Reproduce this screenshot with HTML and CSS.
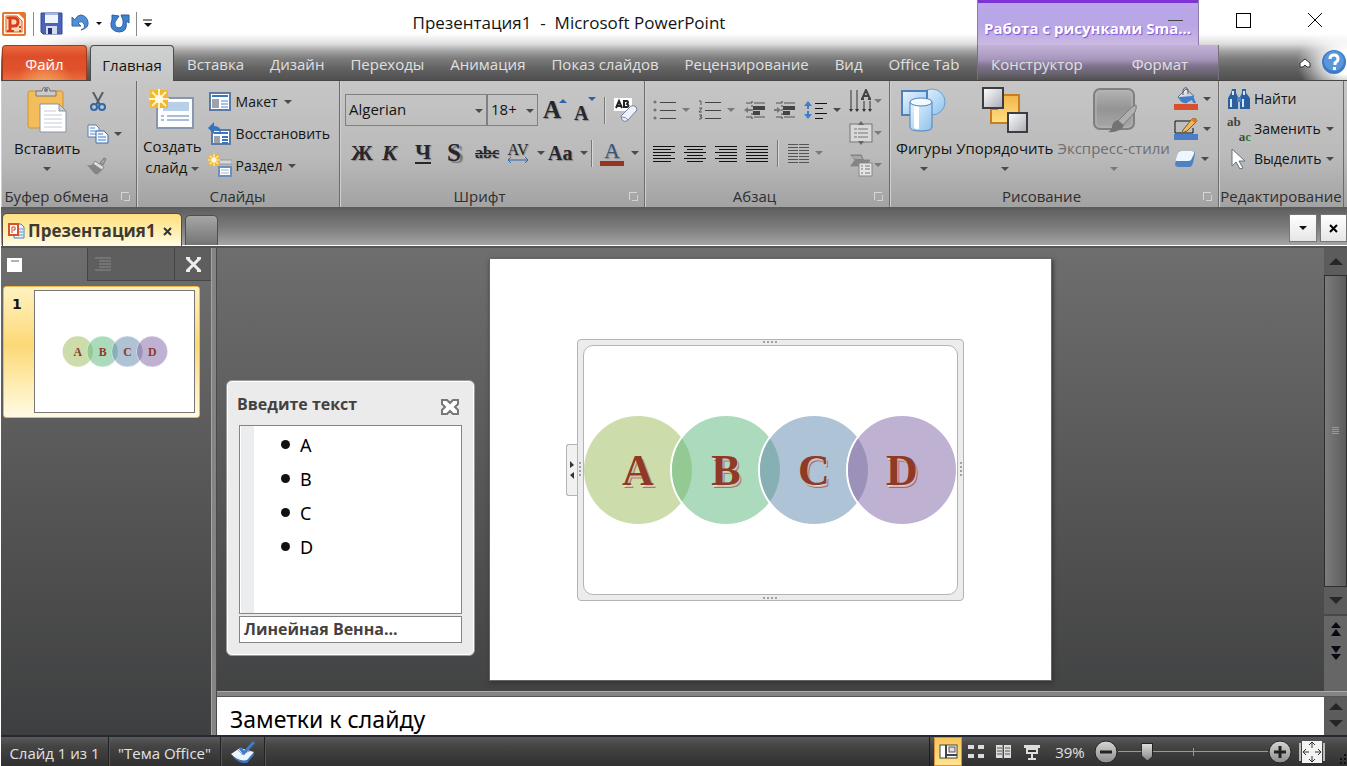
FILE: index.html
```html
<!DOCTYPE html>
<html lang="ru">
<head>
<meta charset="utf-8">
<meta name="viewport" content="width=device-width, initial-scale=1">
<title>Презентация1 - Microsoft PowerPoint</title>
<link rel="stylesheet" href="styles.css">
</head>
<body>
<svg class="defs" aria-hidden="true">
  <defs>
    <linearGradient id="gBlue" x1="0" y1="0" x2="1" y2="1"><stop offset="0" stop-color="#e8f5fe"/><stop offset="1" stop-color="#8fc1ee"/></linearGradient>
    <linearGradient id="gSteel" x1="0" y1="0" x2="1" y2="1"><stop offset="0" stop-color="#fff"/><stop offset="1" stop-color="#a9acb4"/></linearGradient>
    <linearGradient id="gGold" x1="0" y1="0" x2="0" y2="1"><stop offset="0" stop-color="#f2b548"/><stop offset="1" stop-color="#ffdf84"/></linearGradient>
    <linearGradient id="gKnob" x1="0" y1="0" x2="0" y2="1"><stop offset="0" stop-color="#d6d6d6"/><stop offset="1" stop-color="#8c8c8c"/></linearGradient>
    <linearGradient id="gGrey" x1="0" y1="0" x2="0" y2="1"><stop offset="0" stop-color="#b4b4b4"/><stop offset="0.5" stop-color="#949494"/><stop offset="1" stop-color="#a8a8a8"/></linearGradient>
    <symbol id="spark" viewBox="0 0 20 20"><rect x="1" y="1" width="18" height="18" fill="#f3b62c"/><path d="M10 0v20M0 10h20M3 3l14 14M17 3L3 17" stroke="#fff3c4" stroke-width="2"/><circle cx="10" cy="10" r="4" fill="#fffbe6"/></symbol>
  </defs>
</svg>
<div class="app">
  <header class="top">
    <div class="titlebar">
      <div class="qat">
        <svg width="26" height="26" viewBox="0 0 26 26" role="img" aria-label="PowerPoint"><rect x="1" y="1" width="24" height="24" rx="2" fill="#e8752f"/><path d="M3 3h15l5 5v15H3z" fill="#fff6ec"/><path d="M5 5h11l5 5v11H5z" fill="#fbd9bd" stroke="#e0612a"/><path d="M9 20V7h4q4 0 4 4t-4 4h-3" fill="none" stroke="#d8401a" stroke-width="3"/><path d="M6 7h5M6 20h7M19 15v2m0 2v2" stroke="#d8401a" stroke-width="2"/></svg>
        <span class="qsep"></span>
        <button type="button" aria-label="Сохранить"><svg width="23" height="23" viewBox="0 0 23 23"><path d="M1 1h21v21H3l-2-2z" fill="#4a62b8" stroke="#33479a"/><path d="M5 1h13v10H5z" fill="#eef5fc"/><path d="M5 1h13v2H5z" fill="#9db8e2"/><path d="M6 14h11v8H6z" fill="#d5dcec"/><path d="M8 16h4v6H8z" fill="#27347a"/></svg></button>
        <button type="button" class="undo" aria-label="Отменить"><svg width="18" height="20" viewBox="0 0 18 20"><path d="M1 3v9h9L7 9q4-3 6 1t-3 6q8-2 7-8T10 1Q6 1 4 6z" fill="#4f90d6" stroke="#3466a6"/></svg><i class="caret dark"></i></button>
        <button type="button" aria-label="Повторить"><svg width="20" height="20" viewBox="0 0 20 20"><path d="M11 1h8v8l-3-2q2 11-7 11Q0 17 1 9l1-3h0V1l7 1-2 3q-3 3-2 6 1 3 4 3 5-1 4-8z" fill="#3f83cf" stroke="#2d5f9f"/></svg></button>
        <span class="qsep"></span>
        <button type="button" aria-label="Настройка панели"><svg width="10" height="9" viewBox="0 0 10 9"><path d="M0 1h9" stroke="#111" stroke-width="1"/><path d="M1 4h8L5 8z" fill="#111"/></svg></button>
      </div>
      <h1 class="title">Презентация1 &nbsp;-&nbsp; Microsoft PowerPoint</h1>
      <div class="context-title">Работа с рисунками Sma...</div>
      <div class="wincontrols">
        <button type="button" class="min" aria-label="Свернуть"></button>
        <button type="button" class="max" aria-label="Развернуть"><svg width="16" height="16" viewBox="0 0 16 16"><path d="M1 1h14v14H1z" fill="none" stroke="#000" shape-rendering="crispEdges"/></svg></button>
        <button type="button" class="close" aria-label="Закрыть"><svg width="16" height="16" viewBox="0 0 16 16"><path d="M1 1l14 14M15 1L1 15" stroke="#000"/></svg></button>
      </div>
    </div>
    <nav class="tabs" aria-label="Лента">
      <button type="button" class="tab file">Файл</button>
      <button type="button" class="tab active">Главная</button>
      <button type="button" class="tab">Вставка</button>
      <button type="button" class="tab">Дизайн</button>
      <button type="button" class="tab">Переходы</button>
      <button type="button" class="tab">Анимация</button>
      <button type="button" class="tab">Показ слайдов</button>
      <button type="button" class="tab">Рецензирование</button>
      <button type="button" class="tab">Вид</button>
      <button type="button" class="tab">Office Tab</button>
      <div class="context-tabs"><button type="button" class="tab">Конструктор</button><button type="button" class="tab">Формат</button></div>
      <div class="helpers">
        <button type="button" aria-label="Свернуть ленту"><svg width="14" height="12" viewBox="0 0 14 12"><path d="M2 10V6l5-4 5 4v4H9L7 8l-2 2z" fill="#fff" stroke="#333"/></svg></button>
        <button type="button" aria-label="Справка"><svg width="25" height="25" viewBox="0 0 25 25"><circle cx="12" cy="12" r="12" fill="#3b7bc8"/><circle cx="12" cy="11" r="10" fill="#5a96da"/><path d="M8 9q0-4 4-4t4 4q0 2-3 4v2" fill="none" stroke="#fff" stroke-width="3"/><rect x="11" y="17" width="3" height="3" fill="#fff"/></svg></button>
      </div>
    </nav>
  </header>

  <section class="ribbon">
    <div class="group g-clip">
      <div class="body">
        <button type="button" class="big paste">
          <svg width="40" height="46" viewBox="0 0 40 46"><rect x="1" y="4" width="35" height="37" rx="2" fill="#f2bd5a" stroke="#cf9335"/><path d="M9 9V4h6q0-4 4-4t4 4h6v5z" fill="#c9cbce" stroke="#77797d"/><circle cx="19" cy="3" r="2" fill="#777"/><path d="M13 17h19l7 7v21H13z" fill="#fff" stroke="#8894a8"/><path d="M32 17v7h7z" fill="#c6cfdd" stroke="#8894a8"/><path d="M17 24h12M17 28h18M17 32h18M17 36h18M17 40h18" stroke="#c3ccd8"/></svg>
          <span>Вставить</span><i class="caret"></i>
        </button>
        <div class="stack">
          <button type="button" class="ico" aria-label="Вырезать"><svg width="16" height="20" viewBox="0 0 16 20"><path d="M3 0l7 13M13 0L6 13" stroke="#555d68" stroke-width="2"/><circle cx="4" cy="15" r="3" fill="none" stroke="#2f68ad" stroke-width="2"/><circle cx="12" cy="15" r="3" fill="none" stroke="#2f68ad" stroke-width="2"/></svg></button>
          <button type="button" class="ico" aria-label="Копировать"><svg width="22" height="20" viewBox="0 0 22 20"><path d="M1 1h8l3 3v9H1z" fill="#f4f8fd" stroke="#5a7fae"/><path d="M3 4h5M3 7h7M3 10h7" stroke="#5a8fd0"/><path d="M9 7h8l4 4v8H9z" fill="#f4f8fd" stroke="#3a6cab"/><path d="M11 10h5M11 13h8M11 16h8" stroke="#3a7ccf"/></svg><i class="caret"></i></button>
          <button type="button" class="ico" aria-label="Формат по образцу"><svg width="20" height="18" viewBox="0 0 20 18"><path d="M13 6l4-5 2 1-3 6z" fill="#a4a4a4" stroke="#777"/><path d="M8 4l9 6-2 3-9-6z" fill="#dedede" stroke="#888"/><path d="M6 7l9 6-4 4q-2 1-4-1L0 8q4 1 6-1z" fill="#858585"/></svg></button>
        </div>
      </div>
      <footer><span>Буфер обмена</span><i class="launch"></i></footer>
    </div>

    <div class="group g-slides">
      <div class="body">
        <button type="button" class="big">
          <svg width="46" height="42" viewBox="0 0 46 42"><path d="M8 9h36v30H8z" fill="#fbfdff" stroke="#8797ad" stroke-width="2"/><path d="M14 13h26v9H14z" fill="#b9cfe8"/><path d="M12 27h3m3 0h22M12 31h3m3 0h22" stroke="#a9bdd4" stroke-width="2"/><use href="#spark" width="20" height="20"/></svg>
          <span>Создать<br>слайд <i class="caret"></i></span>
        </button>
        <div class="stack">
          <button type="button" class="row"><svg width="24" height="20" viewBox="0 0 24 20"><rect x="2" y="1" width="20" height="17" fill="#fff" stroke="#5c7ba4" stroke-width="2"/><path d="M4 4h16" stroke="#3f76ba" stroke-width="2"/><rect x="4" y="7" width="7" height="9" fill="#9ba3ae"/><path d="M13 9h7M13 12h7M13 15h7" stroke="#4a8ad0"/></svg><span>Макет</span><i class="caret"></i></button>
          <button type="button" class="row"><svg width="24" height="24" viewBox="0 0 24 24"><rect x="4" y="8" width="18" height="14" fill="#fff" stroke="#5c7ba4" stroke-width="2"/><path d="M6 11h14" stroke="#3f76ba" stroke-width="2"/><rect x="6" y="14" width="6" height="7" fill="#9ba3ae"/><path d="M14 15h6M14 18h6M14 21h6" stroke="#3a74bd" stroke-width="2"/><path d="M0 6l6-6v4q7 0 7 7-2-3-7-3v4z" fill="#3474bf"/></svg><span>Восстановить</span></button>
          <button type="button" class="row"><svg width="24" height="24" viewBox="0 0 24 24"><path d="M11 6h13v4H11z" fill="#d6d8da" stroke="#999"/><rect x="11" y="13" width="12" height="9" fill="#fff" stroke="#6d90bd" stroke-width="2"/><path d="M13 16h8M13 19h8" stroke="#9bb9db"/><use href="#spark" width="12" height="12"/></svg><span>Раздел</span><i class="caret"></i></button>
        </div>
      </div>
      <footer><span>Слайды</span></footer>
    </div>

    <div class="group g-font">
      <div class="body">
        <div class="line first">
          <div class="combos">
            <label class="combo name"><select aria-label="Шрифт"><option>Algerian</option></select><i class="caret"></i></label>
            <label class="combo size"><select aria-label="Размер шрифта"><option>18+</option></select><i class="caret"></i></label>
          </div>
          <button type="button" class="glyph a-big" aria-label="Увеличить размер">A<i class="up"></i></button>
          <button type="button" class="glyph a-small" aria-label="Уменьшить размер">A<i class="down"></i></button>
          <span class="sep"></span>
          <button type="button" class="ico" aria-label="Очистить формат"><svg width="24" height="26" viewBox="0 0 24 26"><rect x="0" y="1" width="18" height="13" fill="#fff"/><path d="M2 11l3-7 3 7M3 9h4M10 4h3q2 1 0 3 3 2 0 3h-3z" fill="none" stroke="#222" stroke-width="2"/><path d="M7 19L17 9q3-1 5 1l1 3L13 24q-3 1-5-1z" fill="#eef1f8" stroke="#75829c"/><path d="M8 20q4 0 6 3" fill="none" stroke="#6b8fc4"/></svg></button>
        </div>
        <div class="line second">
          <button type="button" class="glyph">Ж</button>
          <button type="button" class="glyph it">К</button>
          <button type="button" class="glyph un">Ч</button>
          <button type="button" class="glyph sh">S</button>
          <button type="button" class="glyph st">abc</button>
          <button type="button" class="glyph av">AV<svg width="22" height="6" viewBox="0 0 22 6"><path d="M1 3h20M4 0L1 3l3 3M18 0l3 3-3 3" fill="none" stroke="#2b64b2"/></svg></button><i class="caret"></i>
          <button type="button" class="glyph aa">Aa</button><i class="caret"></i>
          <span class="sep"></span>
          <button type="button" class="glyph col">A<i class="bar"></i></button><i class="caret"></i>
        </div>
      </div>
      <footer><span>Шрифт</span><i class="launch"></i></footer>
    </div>

    <div class="group g-para">
      <div class="body">
        <div class="lines">
          <div class="line">
            <button type="button" class="ico" aria-label="Маркеры"><svg width="24" height="20" viewBox="0 0 24 20"><g fill="#ccc" stroke="#555"><circle cx="2" cy="2" r="1"/><circle cx="2" cy="10" r="1"/><circle cx="2" cy="18" r="1"/></g><path d="M7 2h16M7 10h16M7 18h16" stroke="#444" shape-rendering="crispEdges"/></svg><i class="caret soft"></i></button>
            <button type="button" class="ico" aria-label="Нумерация"><svg width="24" height="20" viewBox="0 0 24 20"><path d="M1 1h2v4M1 8h3l-3 4h3M1 15h3l-2 2h2l-1 2H1" fill="none" stroke="#555"/><path d="M7 2h16M7 10h16M7 18h16" stroke="#444" shape-rendering="crispEdges"/></svg><i class="caret soft"></i></button>
            <button type="button" class="ico" aria-label="Уменьшить отступ"><svg width="22" height="18" viewBox="0 0 22 18"><path d="M2 2h19M2 16h19" stroke="#555" stroke-dasharray="6 2 12"/><path d="M9 5h12v4H9zM9 10h7v4H9z" fill="#444"/><path d="M8 0v18" stroke="#444" stroke-dasharray="2 2"/><path d="M0 9l4-3v2h3v2H4v2z" fill="#777"/></svg></button>
            <button type="button" class="ico" aria-label="Увеличить отступ"><svg width="22" height="18" viewBox="0 0 22 18"><path d="M2 2h19M2 16h19" stroke="#555" stroke-dasharray="6 2 12"/><path d="M9 5h12v4H9zM9 10h7v4H9z" fill="#444"/><path d="M8 0v18" stroke="#444" stroke-dasharray="2 2"/><path d="M7 9L3 6v2H0v2h3v2z" fill="#777"/></svg></button>
            <button type="button" class="ico" aria-label="Междустрочный интервал"><svg width="24" height="20" viewBox="0 0 24 20"><path d="M0 6l4-5 4 5H5v3H3V6zM0 14l4 5 4-5H5v-3H3v3z" fill="#3a7fd0"/><path d="M11 3h12M11 8h8M11 13h12M11 18h8" stroke="#111" shape-rendering="crispEdges"/></svg><i class="caret"></i></button>
          </div>
          <div class="line second">
            <button type="button" class="ico" aria-label="По левому краю"><svg width="22" height="17" viewBox="0 0 22 17"><path d="M0 1h22M0 4h18M0 7h22M0 10h18M0 13h22M0 16h18" stroke="#111" shape-rendering="crispEdges"/></svg></button>
            <button type="button" class="ico" aria-label="По центру"><svg width="22" height="17" viewBox="0 0 22 17"><path d="M0 1h22M3 4h16M0 7h22M3 10h16M0 13h22M3 16h16" stroke="#111" shape-rendering="crispEdges"/></svg></button>
            <button type="button" class="ico" aria-label="По правому краю"><svg width="22" height="17" viewBox="0 0 22 17"><path d="M0 1h22M4 4h18M0 7h22M4 10h18M0 13h22M4 16h18" stroke="#111" shape-rendering="crispEdges"/></svg></button>
            <button type="button" class="ico" aria-label="По ширине"><svg width="22" height="17" viewBox="0 0 22 17"><path d="M0 1h22M0 4h22M0 7h22M0 10h22M0 13h22M0 16h22" stroke="#111" shape-rendering="crispEdges"/></svg></button>
            <span class="sep"></span>
            <button type="button" class="ico" aria-label="Колонки"><svg width="22" height="20" viewBox="0 0 22 20"><path d="M0 1h10m1 0h10M0 4h10m1 0h10M0 7h10m1 0h10M0 10h10m1 0h10M0 13h10m1 0h10M0 16h10m1 0h10M0 19h10m1 0h10" stroke="#555" shape-rendering="crispEdges"/></svg><i class="caret soft"></i></button>
          </div>
        </div>
        <div class="stack">
          <button type="button" class="ico" aria-label="Направление текста"><svg width="24" height="24" viewBox="0 0 24 24"><path d="M2 1v20M8 1v20M15 12v9M21 12v9" stroke="#333"/><path d="M0 20h4l-2 3zM6 20h4l-2 3zM13 20h4l-2 3zM19 20h4l-2 3z" fill="#333"/><path d="M13 10l4-9 4 9M14 7h6M12 10h3M19 10h3" fill="none" stroke="#444" stroke-width="2"/></svg><i class="caret soft"></i></button>
          <button type="button" class="ico" aria-label="Выровнять текст"><svg width="24" height="24" viewBox="0 0 24 24"><rect x="1" y="3" width="22" height="18" fill="#d8d8d8" stroke="#777"/><path d="M5 8h3m1 0h10M5 12h3m1 0h10M5 16h3m1 0h10" stroke="#777"/><path d="M9 4l3-4 3 4zM9 20l3 4 3-4z" fill="#666"/></svg><i class="caret soft"></i></button>
          <button type="button" class="ico" aria-label="Преобразовать в SmartArt"><svg width="24" height="24" viewBox="0 0 24 24"><path d="M0 1h13l2 5h7l-3 8H0l5-7z" fill="#858585" stroke="#bbb"/><path d="M2 3h10l1 3H6z" fill="#a8a8a8"/><rect x="10" y="10" width="13" height="13" fill="#e4e4e4" stroke="#888"/><path d="M12 13h2m2 0h5M12 16h2m2 0h5M12 20h2m2 0h5" stroke="#777"/></svg><i class="caret soft"></i></button>
        </div>
      </div>
      <footer><span>Абзац</span><i class="launch"></i></footer>
    </div>

    <div class="group g-draw">
      <div class="body">
        <button type="button" class="big">
          <svg width="46" height="46" viewBox="0 0 46 46"><circle cx="31" cy="15" r="13" fill="url(#gBlue)" stroke="#6b9fd4"/><rect x="1" y="4" width="25" height="24" fill="url(#gBlue)" stroke="#4f81b8" stroke-width="2"/><path d="M9 15v25q0 4 11 4t11-4V15z" fill="url(#gBlue)" stroke="#4f81b8"/><path d="M13 17h5v25q-5 0-5-2z" fill="#fff"/><ellipse cx="20" cy="15" rx="11" ry="4" fill="#f1f9ff" stroke="#4f81b8"/></svg>
          <span>Фигуры</span><i class="caret"></i>
        </button>
        <button type="button" class="big">
          <svg width="46" height="46" viewBox="0 0 46 46"><path d="M15 8h22v28H9V22h6z" fill="url(#gGold)" stroke="#c77d20" stroke-width="2"/><rect x="1" y="1" width="20" height="20" fill="url(#gSteel)" stroke="#3c3c44" stroke-width="2"/><rect x="26" y="26" width="19" height="19" fill="url(#gSteel)" stroke="#3c3c44" stroke-width="2"/></svg>
          <span>Упорядочить</span><i class="caret"></i>
        </button>
        <button type="button" class="big off">
          <svg width="46" height="46" viewBox="0 0 46 46"><rect x="3" y="2" width="40" height="40" rx="6" fill="url(#gGrey)" stroke="#808080" stroke-width="2"/><rect x="5" y="4" width="36" height="36" rx="4" fill="none" stroke="#b5b5b5"/><path d="M45 18q1 3-1 7L32 38l-5-4L41 20z" fill="#b0b0b0" stroke="#7c7c7c"/><path d="M27 33l6 6q-5 7-16 6 4-2 4-6 1-5 6-6z" fill="#737373"/></svg>
          <span>Экспресс-стили</span><i class="caret soft"></i>
        </button>
        <div class="stack">
          <button type="button" class="ico" aria-label="Заливка"><svg width="24" height="24" viewBox="0 0 24 24"><path d="M4 10L12 2l8 7-8 7q-5 0-8-6z" fill="url(#gSteel)" stroke="#54708f"/><path d="M9 8V3q3-5 5 0v4" fill="none" stroke="#555"/><path d="M5 10l14-1 3 7q-3 1-4-3l-6 3q-5 0-7-6z" fill="#3d7fcd"/><rect y="17" width="24" height="6" fill="#d9502e"/></svg><i class="caret"></i></button>
          <button type="button" class="ico" aria-label="Контур"><svg width="24" height="24" viewBox="0 0 24 24"><path d="M17 4H1v12h18v-5" fill="none" stroke="#111"/><path d="M9 13L18 2q4-2 5 2L13 14l-5 2z" fill="#f2b95c" stroke="#7a5a30"/><path d="M18 2q4-2 5 2l-2 2-4-3z" fill="#e07a28"/><rect y="17" width="24" height="6" fill="#4a7fc8"/></svg><i class="caret"></i></button>
          <button type="button" class="ico" aria-label="Эффекты"><svg width="22" height="18" viewBox="0 0 22 18"><path d="M5 1h12q4 0 4 3l-2 9q-1 4-4 4H5q-4 0-4-3z" fill="#4d83c2"/><path d="M7 1h10q4 0 3 3l-3 6q-1 1-3 1H4q-3 0-2-2l2-6q1-2 3-2z" fill="#eef6ff"/></svg><i class="caret"></i></button>
        </div>
      </div>
      <footer><span>Рисование</span><i class="launch"></i></footer>
    </div>

    <div class="group g-edit">
      <div class="body">
        <div class="stack">
          <button type="button" class="row"><svg width="24" height="22" viewBox="0 0 24 22"><path d="M5 1h4v4l2 4v12H1V10l3-5zM15 1h4v4l4 5v11H13V9l2-4z" fill="#2c5f9f"/><path d="M4 11v8M6 3v4M16 11v8M17 3v4" stroke="#d5e8fb" stroke-width="2"/><path d="M10 9h4v5h-4z" fill="#4a86c8"/></svg><span>Найти</span></button>
          <button type="button" class="row"><span class="repl" aria-hidden="true"><b>ab</b><em>a<i>c</i></em></span><span>Заменить</span><i class="caret"></i></button>
          <button type="button" class="row"><svg width="24" height="22" viewBox="0 0 24 22"><path d="M5 1l13 12h-6l4 7-3 1-4-7-4 4z" fill="#fff" stroke="#66707e"/></svg><span>Выделить</span><i class="caret"></i></button>
        </div>
      </div>
      <footer><span>Редактирование</span></footer>
    </div>
  </section>

  <div class="doctabs">
    <div class="doctab">
      <svg width="17" height="17" viewBox="0 0 17 17"><path d="M6 1h7l3 3v11H6z" fill="#e4effb" stroke="#5480b8"/><path d="M11 6h4M11 9h4M8 12h7" stroke="#5e94d2"/><rect x="1" y="1" width="9" height="11" fill="#fff" stroke="#d6522b" stroke-width="2"/><path d="M4 10V4h3v3H5" fill="none" stroke="#c6431f" stroke-width="1"/></svg>
      <span>Презентация1</span>
      <button type="button" aria-label="Закрыть вкладку"><svg width="9" height="9" viewBox="0 0 9 9"><path d="M1 1l7 7M8 1L1 8" stroke="#333" stroke-width="2"/></svg></button>
    </div>
    <button type="button" class="newtab" aria-label="Новая вкладка"></button>
    <div class="docbuttons">
      <button type="button" aria-label="Список вкладок"><i class="caret dark"></i></button>
      <button type="button" aria-label="Закрыть"><svg width="9" height="9" viewBox="0 0 9 9"><path d="M1 1l7 7M8 1L1 8" stroke="#000" stroke-width="2"/></svg></button>
    </div>
  </div>

  <main class="work">
    <aside class="side">
      <div class="sidetabs">
        <button type="button" class="on" aria-label="Слайды"><svg width="16" height="14" viewBox="0 0 16 14"><rect width="15" height="14" fill="#fff"/><path d="M4 3h8" stroke="#666"/></svg></button>
        <button type="button" aria-label="Структура"><svg width="18" height="14" viewBox="0 0 18 14"><path d="M1 1h16M5 4h12M5 7h12M5 10h12M1 13h16" stroke="#8a8a8a"/></svg></button>
        <button type="button" class="x" aria-label="Закрыть"><svg width="17" height="17" viewBox="0 0 17 17"><path d="M2 2l13 13M15 2L2 15" stroke="#eee" stroke-width="3"/><path d="M1 2h4M12 2h4M1 15h4M12 15h4" stroke="#eee" stroke-width="2"/></svg></button>
      </div>
      <button type="button" class="thumb" aria-label="Слайд 1">
        <b>1</b>
        <span class="mini">
          <svg width="106" height="31" viewBox="583 415 374 110" role="img" aria-label="A B C D"><use href="#venn"/><g class="mini-letters"><text x="638" y="485">A</text><text x="726" y="485">B</text><text x="814" y="485">C</text><text x="902" y="485">D</text></g></svg>
        </span>
      </button>
    </aside>
    <div class="split"></div>
    <div class="right">
      <div class="upper">
        <div class="stage">
          <div class="slide">
            <div class="smart">
              <span class="dots top-dots"></span><span class="dots bottom-dots"></span><span class="vdots left-dots"></span><span class="vdots right-dots"></span>
              <button type="button" class="handle" aria-label="Область текста"><svg width="6" height="18" viewBox="0 0 6 18"><path d="M1 0l4 4-4 3zM5 11v7l-4-4z" fill="#333"/></svg></button>
              <div class="art">
                <svg viewBox="584 415 373 110">
                  <defs>
                    <clipPath id="c2"><circle cx="726" cy="470" r="54"/></clipPath>
                    <clipPath id="c3"><circle cx="814" cy="470" r="54"/></clipPath>
                    <clipPath id="c4"><circle cx="902" cy="470" r="54"/></clipPath>
                    <g id="venn">
                      <circle cx="638" cy="470" r="54" fill="#ccdcaa"/>
                      <circle cx="726" cy="470" r="55" fill="#acdabc" stroke="#fff" stroke-width="2"/>
                      <circle cx="638" cy="470" r="54" fill="#93c993" clip-path="url(#c2)"/>
                      <circle cx="814" cy="470" r="55" fill="#aec3d6" stroke="#fff" stroke-width="2"/>
                      <circle cx="726" cy="470" r="54" fill="#86b0b4" clip-path="url(#c3)"/>
                      <circle cx="902" cy="470" r="55" fill="#bfb1d2" stroke="#fff" stroke-width="2"/>
                      <circle cx="814" cy="470" r="54" fill="#9b91b9" clip-path="url(#c4)"/>
                    </g>
                  </defs>
                  <use href="#venn"/>
                  <g class="letters"><text x="638" y="485">A</text><text x="726" y="485">B</text><text x="814" y="485">C</text><text x="902" y="485">D</text></g>
                </svg>
              </div>
            </div>
          </div>
          <section class="textpane" aria-label="Введите текст">
            <header><h2>Введите текст</h2><button type="button" aria-label="Закрыть"><svg width="18" height="16" viewBox="0 0 18 16"><path d="M1 1h5l3 3 3-3h5v4l-3 3 3 3v4h-5l-3-3-3 3H1v-4l3-3-3-3z" fill="#fff" stroke="#777" stroke-width="2"/></svg></button></header>
            <div class="list"><ul contenteditable="true"><li>A</li><li>B</li><li>C</li><li>D</li></ul></div>
            <p>Линейная Венна...</p>
          </section>
        </div>
        <div class="scroll">
          <button type="button" aria-label="Вверх"><i class="tri up"></i></button>
          <div class="track"><span></span></div>
          <button type="button" aria-label="Вниз"><i class="tri down"></i></button>
          <div class="pager">
            <button type="button" aria-label="Предыдущий слайд"><svg width="10" height="14" viewBox="0 0 10 14"><path d="M0 6l5-6 5 6zM0 14l5-7 5 7z" fill="#0c0712"/></svg></button>
            <button type="button" aria-label="Следующий слайд"><svg width="10" height="14" viewBox="0 0 10 14"><path d="M0 0l5 7 5-7zM0 8l5 6 5-6z" fill="#0c0712"/></svg></button>
          </div>
        </div>
      </div>
      <div class="hsplit"></div>
      <div class="notes">
        <textarea rows="1" aria-label="Заметки">Заметки к слайду</textarea>
        <div class="nscroll"><i class="tri up"></i><i class="tri down"></i></div>
      </div>
    </div>
  </main>

  <footer class="status">
    <span class="cell">Слайд 1 из 1</span>
    <span class="cell">"Тема Office"</span>
    <span class="cell spell"><svg width="26" height="22" viewBox="0 0 26 22"><path d="M1 13l9-6 14 4-7 10q-8 1-16-8z" fill="#eef4fb"/><path d="M1 13q8 8 16 6l7-8v3l-7 8Q7 23 1 13z" fill="#3c74b8"/><path d="M8 9l5 5M20 10l-9 3" stroke="#90a9c6"/><path d="M10 7l4 5L24 1" fill="none" stroke="#3e7cc9" stroke-width="3"/></svg></span>
    <div class="views">
      <button type="button" class="on" aria-label="Обычный"><svg width="19" height="15" viewBox="0 0 19 15"><rect x="1" y="1" width="17" height="13" fill="#fff" stroke="#444"/><path d="M7 1v13M7 11h11" stroke="#444" stroke-width="2"/><rect x="10" y="3" width="6" height="5" fill="#ddd" stroke="#555"/></svg></button>
      <button type="button" aria-label="Сортировщик"><svg width="16" height="15" viewBox="0 0 16 15"><path d="M0 1h6v4H0zM10 1h6v4h-6zM0 10h6v4H0zM10 10h6v4h-6z" fill="#ddd"/></svg></button>
      <button type="button" aria-label="Чтение"><svg width="16" height="16" viewBox="0 0 16 16"><path d="M0 1h7v13H0zM8 1h7v13H8z" fill="#ddd"/><path d="M1 4h5m3 0h5M1 7h5m3 0h5M1 10h5m3 0h5M7 0v16" stroke="#555"/></svg></button>
      <button type="button" aria-label="Показ"><svg width="16" height="16" viewBox="0 0 16 16"><path d="M0 1h16v3H0zM2 4h12v6H2z" fill="#ddd"/><path d="M4 6h8v2H4z" fill="#333"/><path d="M8 10v4M4 15h8" stroke="#ddd" stroke-width="2"/></svg></button>
    </div>
    <output class="pct">39%</output>
    <div class="zoom">
      <button type="button" aria-label="Уменьшить"><svg width="24" height="24" viewBox="0 0 24 24"><circle cx="12" cy="12" r="11" fill="url(#gKnob)" stroke="#222"/><path d="M6 12h12" stroke="#222" stroke-width="3"/></svg></button>
      <input type="range" min="0" max="100" value="17" aria-label="Масштаб">
      <button type="button" aria-label="Увеличить"><svg width="24" height="24" viewBox="0 0 24 24"><circle cx="12" cy="12" r="11" fill="url(#gKnob)" stroke="#222"/><path d="M6 12h12M12 6v12" stroke="#222" stroke-width="3"/></svg></button>
    </div>
    <button type="button" class="fit" aria-label="Вписать слайд"><svg width="26" height="24" viewBox="0 0 26 24"><path d="M3 1h20v22H3z" fill="#f3f3f3"/><path d="M1 3v18M25 3v18" stroke="#bbb" stroke-width="2"/><path d="M13 2v6M10 5l3-3 3 3M13 22v-6M10 19l3 3 3-3M4 12h6M7 9l-3 3 3 3M22 12h-6M19 9l3 3-3 3" fill="none" stroke="#333"/></svg></button>
    <svg class="grip" width="10" height="12" viewBox="0 0 10 12"><path d="M7 1h2M7 5h2M7 9h2M3 5h2M3 9h2" stroke="#111" stroke-width="2"/></svg>
  </footer>
</div>
</body>
</html>
```
FILE: styles.css
```css
* { box-sizing: border-box; }

body {
  margin: 0;
  background: #fff;
  color: #141414;
  font: 15px/20px "Open Sans", "Noto Sans", sans-serif;
}

button {
  display: flex;
  align-items: center;
  padding: 0;
  border: 0;
  background: none;
  color: inherit;
  font: inherit;
  white-space: nowrap;
}

svg { display: block; flex: none; }
.defs { position: absolute; width: 0; height: 0; }
i, em { font-style: normal; }

.app {
  display: flex;
  flex-direction: column;
  height: 100vh;
  padding-left: 1px;
}

.caret {
  flex: none;
  display: inline-block;
  border: 4px solid transparent;
  border-top-color: #4a4a4a;
  border-bottom: 0;
}
.caret.soft { border-top-color: #7a7a7a; }
.caret.dark { border-top-color: #111; }

/* title bar and ribbon tabs */
.top {
  flex: none;
  border-bottom: 1px solid #4a4646;
  background:
    radial-gradient(ellipse 50px 40px at 100% 62px, #fff 30%, transparent),
    radial-gradient(ellipse 90px 20px at 0 40px, #fff 30%, transparent),
    linear-gradient(#fff 34px, #dcdcdc 44px, #a4a4a4 51px, #7e7e7e 58px, #636363 68px, #505050);
}

.titlebar { display: flex; height: 45px; }

.qat {
  display: flex;
  align-items: center;
  gap: 8px;
  width: 160px;
  padding: 2px 0 0;
}
.qsep { width: 1px; height: 24px; margin: 0 -2px; background: #8a8a8a; }
.undo { gap: 7px; }
.undo .caret { border-width: 3px 3px 0; }

.title {
  flex: 1;
  margin: 0;
  font-size: 17px;
  font-weight: 400;
  line-height: 45px;
  text-align: center;
}

.context-title {
  width: 222px;
  padding: 16px 6px 0;
  overflow: hidden;
  border: 1px solid #8a7ca6;
  border-width: 0 1px;
  background: linear-gradient(#7d33d6 3px, #bba6e8 3px, #b8a6e6 26px, #cbb9e2);
  color: #fff;
  font-size: 15px;
  font-weight: 700;
  line-height: 24px;
  text-shadow: 1px 1px 1px #7d4fd0;
  white-space: nowrap;
}

.wincontrols { display: flex; width: 148px; height: 40px; }
.wincontrols button { justify-content: center; }
.wincontrols .min { width: 48px; margin-left: -48px; }
.wincontrols .min::before { content: ""; width: 15px; height: 1px; background: #444; }
.wincontrols .max { width: 88px; }
.wincontrols .close { flex: 1; padding-right: 4px; }

.tabs {
  display: flex;
  height: 35px;
  padding-left: 1px;
  color: #e0e0e0;
}
.tab { justify-content: center; padding: 2px 13px 0; }
.tab.file {
  width: 85px;
  margin-right: 3px;
  border: 1px solid #9c3c1c;
  border-bottom: 0;
  border-radius: 4px 4px 0 0;
  background: radial-gradient(ellipse at 50% 120%, #f5a860, transparent 50%), linear-gradient(#ea6a3e, #dd4d2a 30%, #e0522c 70%, #ea6b3c);
  color: #fff;
}
.tab.active {
  width: 84px;
  margin-bottom: -1px;
  border: 1px solid #4c4c4c;
  border-bottom: 0;
  border-radius: 4px 4px 0 0;
  background: linear-gradient(#cfd0d0, #c6c6c6);
  color: #141414;
}
.context-tabs {
  display: flex;
  gap: 23px;
  width: 242px;
  margin-left: auto;
  border: 1px solid #77717f;
  border-width: 0 1px;
  background: linear-gradient(#c3b2d8, #a897bd 40%, rgba(135, 118, 155, .7) 60%, transparent);
}
.helpers {
  display: flex;
  justify-content: flex-end;
  align-items: center;
  gap: 10px;
  width: 128px;
}

/* ribbon */
.ribbon {
  flex: none;
  display: grid;
  grid-template-columns: 136fr 203fr 305fr 245fr 329fr 128fr;
  height: 128px;
  border-bottom: 2px solid #5c5c5c;
  background: linear-gradient(#c6c6c6, #bababa 60%, #a2a2a2);
}
.group {
  display: flex;
  flex-direction: column;
  min-width: 0;
  border-right: 1px solid #6c6c6c;
  box-shadow: inset 1px 0 #cfcfcf;
}
.group .body { flex: 1; display: flex; }
.group footer {
  display: flex;
  align-items: center;
  gap: 16px;
  height: 22px;
  padding: 0 7px 0 6px;
  color: #2e2e2e;
}
.group footer span { flex: 1; text-align: center; white-space: nowrap; }
.launch {
  width: 8px;
  height: 8px;
  border: 1px solid #d6d6d6;
  border-width: 1px 0 0 1px;
  box-shadow: 2px 2px 0 -1px #d0d0d0;
}
.big {
  flex-direction: column;
  gap: 5px;
  padding-top: 6px;
}
.big > span { line-height: 21px; text-align: center; }
.big .caret { vertical-align: 2px; }
.big > .caret { margin-top: 3px; }
.stack { display: flex; flex-direction: column; padding-top: 5px; }
.stack > button { height: 32px; gap: 4px; }
.stack > .ico { gap: 5px; }
.ico { gap: 5px; }
.row { font-size: 14px; }
.row .caret { margin-left: 2px; }
.line { display: flex; align-items: center; justify-content: space-between; height: 32px; }
.line.second { margin-top: 11px; }
.sep { width: 2px; height: 27px; border-left: 1px solid #777; background: #d8d8d8; }

.g-clip .body { padding-left: 13px; gap: 7px; }
.g-clip footer { padding-left: 3px; gap: 12px; }
.g-clip .stack .ico:nth-child(1) { padding-left: 3px; }
.g-slides .body { padding-left: 6px; gap: 6px; }
.g-slides .big { gap: 5px; padding-top: 8px; }

.g-font .body { flex-direction: column; padding: 13px 6px 0 5px; }
.line.first { justify-content: flex-start; }
.first .sep { margin: 0 8px 0 5px; }
.combos { display: flex; margin-right: 5px; }
.combo { position: relative; display: block; }
.combo .caret { position: absolute; right: 4px; top: 15px; }
.combo select {
  width: 100%;
  height: 32px;
  padding: 0 3px 3px;
  border: 1px solid #808080;
  border-radius: 0;
  appearance: none;
  background: transparent;
  color: #141414;
  font: inherit;
}
.combo.name { width: 142px; }
.combo.size { width: 51px; }

.glyph {
  position: relative;
  color: #26262c;
  font: 700 22px/26px "Liberation Serif", serif;
  text-shadow: 1px 1px 1px #888;
}
.a-big { width: 31px; font-size: 25px; }
.a-small { width: 25px; font-size: 20px; padding-top: 5px; }
.glyph .up, .glyph .down { position: absolute; right: 7px; top: 2px; border: 4px solid transparent; }
.glyph .down { right: 3px; }
.glyph .up { border-bottom-color: #2c62ac; border-top: 0; }
.glyph .down { border-top-color: #2c62ac; border-bottom: 0; }
.g-font .second {
  display: grid;
  grid-template-columns: 31px 33px 32px 28px 32px 26px 15px 29px 14px 9px 30px 10px;
  justify-content: start;
  justify-items: start;
  padding-left: 6px;
}
.glyph.it { font-style: italic; }
.glyph.un { border-bottom: 2px solid #26262c; line-height: 20px; }
.glyph.sh { font-size: 25px; text-shadow: 3px 2px 1px #777; }
.glyph.st { font-size: 16px; text-decoration: line-through; }
.glyph.av { flex-direction: column; font-size: 16px; line-height: 14px; font-weight: 400; }
.glyph.aa { font-size: 20px; }
.glyph.col { flex-direction: column; width: 24px; color: #34557e; font-size: 22px; font-weight: 400; line-height: 20px; }
.glyph .bar { width: 24px; height: 5px; background: #963523; }
.g-font .second > .caret { justify-self: center; }

.g-para .body { padding: 0 7px 0 8px; }
.g-para .lines { width: 188px; margin-right: 6px; padding-top: 13px; }
.g-para .second { width: 170px; }
.g-para .stack, .g-draw .stack { margin-left: auto; }
.g-para .stack > button { gap: 1px; }
.g-para .stack { padding-top: 4px; }

.g-draw .body { padding: 0 7px 0 6px; gap: 4px; }
.g-draw .stack > button, .g-edit .stack > button { height: 30px; }
.g-draw .stack { padding-top: 3px; }
.off { color: #6e6e6e; }

.g-edit { margin-right: 3px; }
.g-edit .body { padding-left: 8px; }
.g-edit .stack { padding-top: 3px; }
.g-edit .row { gap: 3px; }
.g-edit footer { padding: 0; }
.repl {
  display: flex;
  flex-direction: column;
  width: 24px;
  color: #444;
  font: 700 13px/15px "Liberation Serif", serif;
  text-align: left;
}
.repl em { align-self: flex-end; }
.repl i { color: #248024; }

/* document tabs */
.doctabs {
  flex: none;
  display: flex;
  gap: 3px;
  height: 39px;
  padding: 4px 0 0 1px;
  border-bottom: 2px solid #545454;
  background: linear-gradient(#606060, #7c7c7c 50%, #a4a4a4 36px, #fff 36px, #fff);
}
.doctab {
  display: flex;
  align-items: center;
  gap: 3px;
  width: 180px;
  padding: 2px 9px 0 5px;
  border: 1px solid #55503c;
  border-bottom: 0;
  border-radius: 5px 5px 0 0;
  background: linear-gradient(#ffdf80, #ffedac 50%, #fffbe6);
  color: #3d3a32;
  font-size: 17px;
  font-weight: 700;
}
.doctab span { flex: 1; }
.newtab {
  align-self: flex-end;
  width: 33px;
  height: 30px;
  margin-bottom: 1px;
  border: 1px solid #4f4f4f;
  border-bottom: 0;
  border-radius: 5px 5px 0 0;
  background: linear-gradient(#a6a6a6, #747474);
}
.docbuttons { display: flex; gap: 3px; margin-left: auto; }
.docbuttons button {
  justify-content: center;
  width: 28px;
  height: 28px;
  margin-top: 1px;
  border: 1px solid #777;
  background: linear-gradient(#fff, #e6e6e6);
}
.docbuttons button:last-child { width: 27px; }

/* work area */
.work {
  flex: 1;
  display: flex;
  min-height: 0;
  background: linear-gradient(#6e6e6e, #565656 50%, #3e3f40);
}
.side { width: 210px; }
.sidetabs {
  display: grid;
  grid-template-columns: 86fr 87fr 37fr;
  height: 33px;
}
.sidetabs button {
  padding-left: 6px;
  border: 1px solid #454545;
  border-width: 0 0 1px 1px;
  background: #5e5e5e;
}
.sidetabs .on { border: 0; background: none; }
.sidetabs .x { padding-left: 10px; }
.thumb {
  display: flex;
  align-items: flex-start;
  width: 197px;
  margin: 5px 0 0 2px;
  padding: 3px 4px 4px 8px;
  border: 1px solid #f0b84a;
  border-radius: 3px;
  background: linear-gradient(#fff2c0, #fcd977 45%, #fff0bb 80%, #fffbe4);
}
.thumb b { width: 22px; font: 700 14px/28px "DejaVu Sans", sans-serif; text-align: left; }
.mini {
  flex: 1;
  display: flex;
  align-items: center;
  justify-content: center;
  height: 123px;
  border: 1px solid #777;
  background: #fff;
}
.mini-letters { fill: #8e3a26; font: 700 42px "Liberation Serif", serif; text-anchor: middle; }

.split { width: 6px; border-right: 1px solid #4a4a4a; border-left: 1px solid #a5a5a5; background: #848484; }
.right { flex: 1; display: flex; flex-direction: column; min-width: 0; }
.upper { flex: 1; display: flex; min-height: 0; }
.stage {
  position: relative;
  flex: 1;
  display: flex;
  align-items: center;
  justify-content: center;
}
.slide {
  display: flex;
  align-items: center;
  justify-content: center;
  width: 563px;
  height: 423px;
  border: 1px solid #666;
  background: #fff;
  box-shadow: 1px 2px 4px #333;
}
.smart {
  position: relative;
  padding: 5px;
  border: 1px solid #b4b4b4;
  border-radius: 4px;
  background: #ececec;
}
.art {
  display: flex;
  align-items: center;
  width: 375px;
  height: 250px;
  border: 1px solid #b4b4b4;
  border-radius: 10px;
  background: #fff;
}
.art svg { width: 100%; }
.letters { fill: #8e3a26; font: 700 44px "Liberation Serif", serif; text-anchor: middle; text-shadow: 1px 2px 0 #fff8, 2px 3px 0 #8e3a2699; }

.dots, .vdots { position: absolute; }
.dots { left: 50%; width: 16px; height: 2px; margin-left: -8px; background: repeating-linear-gradient(90deg, #a0a0a0 0 2px, transparent 2px 4px); }
.vdots { top: 50%; width: 2px; height: 16px; margin-top: -8px; background: repeating-linear-gradient(#a0a0a0 0 2px, transparent 2px 4px); }
.top-dots { top: 1px; }
.bottom-dots { bottom: 1px; }
.left-dots { left: 1px; }
.right-dots { right: 1px; }
.handle {
  position: absolute;
  top: 104px;
  left: -12px;
  justify-content: center;
  width: 11px;
  height: 52px;
  border: 1px solid #b4b4b4;
  border-right: 0;
  border-radius: 3px 0 0 3px;
  background: #f1f1f1;
}

.textpane {
  position: absolute;
  top: 132px;
  left: 9px;
  width: 249px;
  padding: 8px 12px 12px;
  border: 1px solid #999;
  border-radius: 6px;
  background: #ebebeb;
  box-shadow: inset 0 0 0 1px #fff;
  color: #44423f;
}
.textpane header { display: flex; justify-content: space-between; height: 36px; }
.textpane header button { height: 36px; margin-right: 3px; }
.textpane h2 { margin: 0 0 0 -2px; font-size: 16px; font-weight: 700; line-height: 30px; }
.list {
  height: 189px;
  border: 1px solid #858585;
  background: linear-gradient(90deg, #fff 1px, #ecedee 1px, #ecedee 14px, #fff 14px);
}
.list ul {
  margin: 0;
  padding: 2px 0 0 60px;
  color: #000;
  font: 18px/34px "Noto Sans", sans-serif;
  list-style: none;
  outline: 0;
}
.list li::before {
  content: "";
  float: left;
  width: 9px;
  height: 9px;
  margin: 12px 0 0 -19px;
  border-radius: 50%;
  background: #111;
}
.textpane p {
  margin: 2px 0 0;
  padding-left: 4px;
  border: 1px solid #858585;
  background: #fff;
  font-size: 16px;
  font-weight: 700;
  line-height: 25px;
}

.scroll { display: flex; flex-direction: column; width: 23px; background: #5c5c5c; }
.scroll > button { justify-content: center; height: 27px; }
.track {
  flex: 1;
  display: flex;
  align-items: center;
  justify-content: center;
  border: 1px solid #2e2e2e;
  background: linear-gradient(90deg, #7c7c7c, #5c5c5c);
}
.track span { width: 7px; height: 8px; background: repeating-linear-gradient(#999 0 1px, transparent 1px 2px); }
.tri { border: 7px solid transparent; }
.tri.up { border-bottom-color: #262628; border-top: 0; }
.tri.down { border-top-color: #262628; border-bottom: 0; }
.pager {
  display: flex;
  flex-direction: column;
  align-items: center;
  gap: 10px;
  height: 77px;
  padding-top: 6px;
  border-top: 2px solid #484848;
  background: #666;
}
.hsplit { height: 6px; border-top: 1px solid #ababab; border-bottom: 1px solid #555; background: #848484; }
.notes { display: flex; height: 38px; }
.notes textarea {
  flex: 1;
  height: 38px;
  padding: 5px 13px 0;
  overflow: hidden;
  border: 0;
  background: #fff;
  color: #000;
  font: 23px/34px "Noto Sans", sans-serif;
  resize: none;
}
.nscroll { display: flex; flex-direction: column; align-items: center; gap: 10px; width: 23px; padding-top: 6px; background: #5c5c5c; }

/* status bar */
.status {
  flex: none;
  display: flex;
  align-items: center;
  height: 31px;
  border-top: 2px solid #262a30;
  background: linear-gradient(#5a5a5a, #454545 30%, #303030);
  color: #e2e2e2;
}
.cell {
  display: flex;
  align-items: center;
  justify-content: center;
  height: 100%;
  padding: 2px 8px 0;
  border-right: 1px solid #222;
  box-shadow: 1px 0 #555;
  white-space: nowrap;
}
.cell:nth-child(1) { width: 108px; }
.cell:nth-child(2) { width: 112px; }
.cell.spell { width: 44px; padding-top: 0; }
.views { display: flex; height: 100%; margin-left: auto; padding-left: 4px; border-left: 1px solid #1d1d1d; }
.views button { justify-content: center; width: 28px; }
.views .on { background: linear-gradient(#f8c65a, #ffe38c); border: 1px solid #d98f35; }
.pct { width: 48px; margin-left: 0; text-align: center; }
.zoom { display: flex; align-items: center; }
.zoom input {
  width: 150px;
  height: 22px;
  margin: 0;
  appearance: none;
  background:
    linear-gradient(#999, #999) 50% 50% / 1px 8px no-repeat,
    linear-gradient(#999, #999) 0 50% / 100% 1px no-repeat;
}
.zoom input::-webkit-slider-thumb {
  appearance: none;
  width: 12px;
  height: 18px;
  border: 1px solid #222;
  background: linear-gradient(#dcdcdc, #8a8a8a);
  clip-path: polygon(0 0, 100% 0, 100% 70%, 50% 100%, 0 70%);
}
.fit { margin: 0 12px 0 7px; }
.grip { align-self: flex-end; }
```
